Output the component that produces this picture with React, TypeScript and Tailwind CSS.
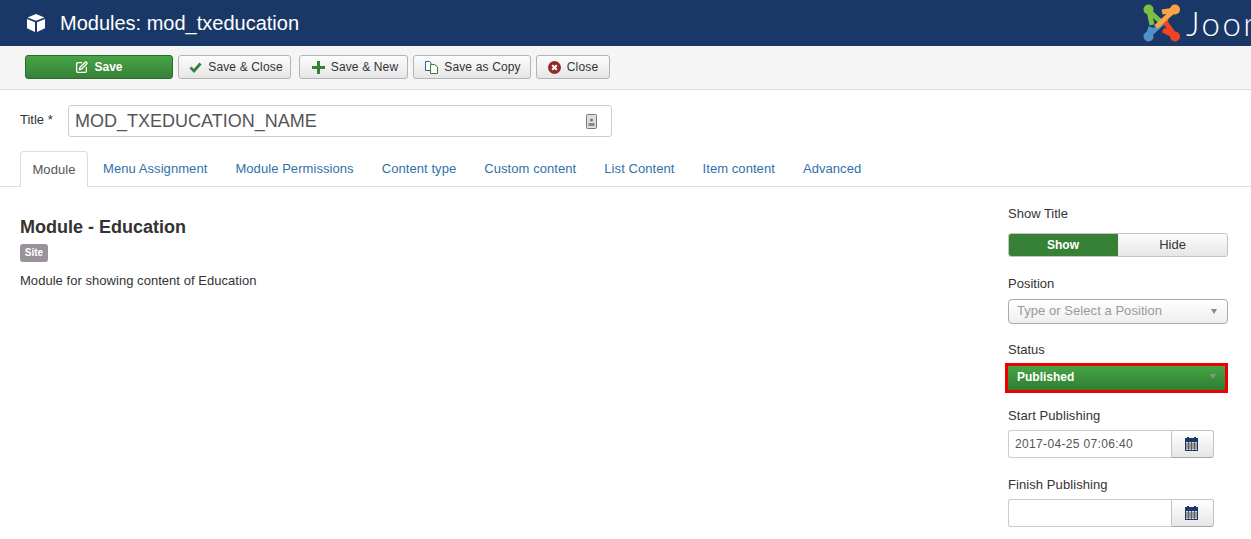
import { SquarePen } from 'lucide-react';

const tabs = ['Menu Assignment', 'Module Permissions', 'Content type', 'Custom content', 'List Content', 'Item content', 'Advanced'];

function CubeIcon() {
  return (
    <svg width="20" height="20" viewBox="0 0 20 20" fill="#fff">
      <path d="M10 1 L18.5 4.4 L10 7.8 L1.5 4.4 Z" />
      <path d="M1 6 L9 9.3 L9 19 L1 15.2 Z" />
      <path d="M19 6 L11 9.3 L11 19 L19 15.2 Z" />
    </svg>
  );
}

// four interlaced arms, each with a ball at its corner
function JoomlaLogo() {
  return (
    <svg width="38" height="38" viewBox="0 0 38 38" fill="none" strokeLinejoin="round" strokeWidth="5">
      <path d="M9 21 L6 7 L18 18" stroke="#7ac143" />
      <circle cx="5.5" cy="5.5" r="5" fill="#7ac143" />
      <path d="M8 23 L5 32 L24 15" stroke="#5091cd" />
      <circle cx="5.5" cy="32.5" r="5" fill="#5091cd" />
      <path d="M20 15 L32 32 L20 26" stroke="#f44321" />
      <circle cx="32" cy="32.5" r="5" fill="#f44321" />
      <path d="M13 23 L27 10 L32 6 L19 8" stroke="#f9a541" />
      <circle cx="32" cy="5.5" r="5" fill="#f9a541" />
    </svg>
  );
}

function CheckIcon() {
  return (
    <svg width="13" height="11" viewBox="0 0 13 11" fill="none">
      <path d="M1.5 5.5 L5 9 L11.5 1.5" stroke="#378137" strokeWidth="2.8" />
    </svg>
  );
}

function PlusIcon() {
  return (
    <svg width="13" height="13" viewBox="0 0 13 13" fill="#378137">
      <path d="M5 0 H8 V5 H13 V8 H8 V13 H5 V8 H0 V5 H5 Z" />
    </svg>
  );
}

function CopyIcon() {
  return (
    <svg width="13" height="13" viewBox="0 0 13 13" fill="none">
      <path d="M0.5 0.5 H4.5 L6 2 V9.5 H0.5 Z" stroke="#30638e" fill="#fff" />
      <path d="M5.5 3.5 H9.5 L12.5 6 V12.5 H5.5 Z" stroke="#378137" fill="#fff" />
    </svg>
  );
}

function CloseIcon() {
  return (
    <svg width="13" height="13" viewBox="0 0 13 13">
      <circle cx="6.5" cy="6.5" r="6.5" fill="#942a25" />
      <path d="M4.2 4.2 L8.8 8.8 M8.8 4.2 L4.2 8.8" stroke="#fff" strokeWidth="2" />
    </svg>
  );
}

function CalendarIcon() {
  return (
    <svg width="13" height="14" viewBox="0 0 13 14">
      <rect x="0" y="1" width="13" height="13" fill="#1a3867" />
      <rect x="2" y="0" width="2" height="2" fill="#1a3867" />
      <rect x="9" y="0" width="2" height="2" fill="#1a3867" />
      <rect x="1" y="5" width="11" height="8" fill="#d8d8d8" />
      <path d="M1 7 H12 M1 9 H12 M1 11 H12 M3.5 5 V13 M6.5 5 V13 M9.5 5 V13" stroke="#555" strokeWidth="0.9" />
    </svg>
  );
}

function ToolButton({ icon, label, className }: { icon: React.ReactNode; label: string; className: string }) {
  return (
    <button className={`flex h-6 items-center justify-center gap-[6px] rounded-[3px] border border-[#b3b3b3] bg-gradient-to-b from-[#fcfcfc] to-[#e6e6e6] text-[12px] tracking-[0.15px] text-[#333] ${className}`}>
      {icon}
      <span>{label}</span>
    </button>
  );
}

function DateField({ value }: { value?: string }) {
  return (
    <div className="flex h-7 w-[206px]">
      <div className="flex-1 rounded-l-[3px] border border-r-0 border-[#ccc] bg-white pl-[6px] text-[12px] leading-[26px] tracking-[0.35px] text-[#555]">
        {value}
      </div>
      <div className="flex w-[43px] items-center justify-center rounded-r-[3px] border border-[#c4c4c4] border-b-[#a8a8a8] bg-gradient-to-b from-white to-[#e6e6e6] pr-[3px] pb-[1px]">
        <CalendarIcon />
      </div>
    </div>
  );
}

export default function App() {
  return (
    <div className="h-[539px] w-[1251px] overflow-hidden bg-white font-['Liberation_Sans',Arial,sans-serif] text-[13px] text-[#333]">
      <header className="flex h-[46px] items-center overflow-hidden bg-[#1a3867] pl-[26px] text-white">
        <CubeIcon />
        <h1 className="ml-[14px] text-[20px]">Modules: mod_txeducation</h1>
        <div className="ml-auto flex w-[108px] shrink-0 items-center gap-[5px] overflow-hidden">
          <div className="shrink-0">
            <JoomlaLogo />
          </div>
          <span className="font-['Lato',sans-serif] text-[33px] leading-none font-light tracking-[2.5px]">Joomla</span>
        </div>
      </header>

      <div className="flex h-[44px] items-start gap-[5px] border-b border-[#ddd] bg-[#f5f5f5] pt-[9px] pl-[25px]">
        <button className="flex h-6 w-[148px] items-center justify-center gap-[6px] rounded-[3px] border border-[#2c6a2c] bg-gradient-to-b from-[#46a546] to-[#378137] text-[12px] font-bold text-white">
          <SquarePen size={13} strokeWidth={2.4} />
          <span>Save</span>
        </button>
        <ToolButton icon={<CheckIcon />} label="Save & Close" className="w-[113px] pl-[3px]" />
        <div className="ml-[3px]">
          <ToolButton icon={<PlusIcon />} label="Save & New" className="w-[109px] pl-[3px]" />
        </div>
        <ToolButton icon={<CopyIcon />} label="Save as Copy" className="w-[118px] pl-[2px]" />
        <ToolButton icon={<CloseIcon />} label="Close" className="w-[74px]" />
      </div>

      <div className="flex items-start pt-[15px] pl-5">
        <label className="w-[48px] pt-[5px]">Title *</label>
        <div className="flex h-8 w-[544px] items-center justify-between rounded-[3px] border border-[#ccc] bg-white pr-[14px] pl-[6px] text-[18px] text-[#555]">
          <span>MOD_TXEDUCATION_NAME</span>
          <svg width="11" height="15" viewBox="0 0 11 15">
            <rect x="0.5" y="0.5" width="10" height="14" rx="1" fill="#ddd" stroke="#777" />
            <rect x="2.5" y="9" width="6" height="3" fill="#888" />
            <circle cx="5.5" cy="6" r="1.6" fill="#777" />
          </svg>
        </div>
      </div>

      <nav className="mt-[14px] flex h-9 items-stretch border-b border-[#ddd] pl-5 tracking-[0.07px]">
        <div className="mb-[-1px] flex w-[68px] items-center justify-center rounded-t-[4px] border border-b-0 border-[#ddd] bg-white text-[#555]">Module</div>
        <div className="ml-[15px] flex items-center gap-7 text-[#3071a9]">
          {tabs.map(tab => (
            <span key={tab}>{tab}</span>
          ))}
        </div>
      </nav>

      <main className="flex justify-between pr-[23px] pl-5">
        <section className="pt-[30px]">
          <h2 className="text-[18px] leading-[20px] font-bold">Module - Education</h2>
          <span className="mt-[7px] block h-[18px] w-[28px] rounded-[3px] bg-[#9a929a] text-center text-[10px] leading-[18px] font-bold text-white">Site</span>
          <p className="mt-[9px] tracking-[0.04px]">Module for showing content of Education</p>
        </section>

        <aside className="w-[220px] pt-[20px]">
          <div className="leading-[14px]">Show Title</div>
          <div className="mt-[12px] flex h-6 overflow-hidden rounded-[3px] border border-[#c4c4c4]">
            <div className="mt-[-1px] mb-[-1px] ml-[-1px] w-[110px] bg-[#378137] text-center text-[12px] leading-[24px] font-bold text-white">Show</div>
            <div className="flex-1 bg-gradient-to-b from-[#fcfcfc] to-[#e6e6e6] text-center leading-[22px] text-[#333]">Hide</div>
          </div>

          <div className="mt-[20px] leading-[14px]">Position</div>
          <div className="mt-[8px] flex h-[25px] items-center justify-between rounded-[4px] border border-[#aaa] bg-gradient-to-b from-white to-[#eee] pr-[10px] pb-[1px] pl-2 tracking-[0.05px] text-[#999]">
            <span>Type or Select a Position</span>
            <span className="h-0 w-0 border-x-[3.5px] border-t-[5px] border-x-transparent border-t-[#888]" />
          </div>

          <div className="mt-[19px] leading-[14px]">Status</div>
          <div className="mt-[6px] ml-[-3px] flex h-[30px] w-[223px] items-center justify-between border-[3px] border-[#ee0000] bg-gradient-to-b from-[#46a546] to-[#2f7d32] pr-[9px] pb-[3px] pl-[9px] text-[12px] font-bold text-white">
            <span>Published</span>
            <span className="h-0 w-0 border-x-[3.5px] border-t-[5px] border-x-transparent border-t-[#7f9f7f]" />
          </div>

          <div className="mt-[16px] leading-[14px] tracking-[0.08px]">Start Publishing</div>
          <div className="mt-[7px]">
            <DateField value="2017-04-25 07:06:40" />
          </div>

          <div className="mt-[20px] leading-[14px] tracking-[0.08px]">Finish Publishing</div>
          <div className="mt-[7px]">
            <DateField />
          </div>
        </aside>
      </main>
    </div>
  );
}
